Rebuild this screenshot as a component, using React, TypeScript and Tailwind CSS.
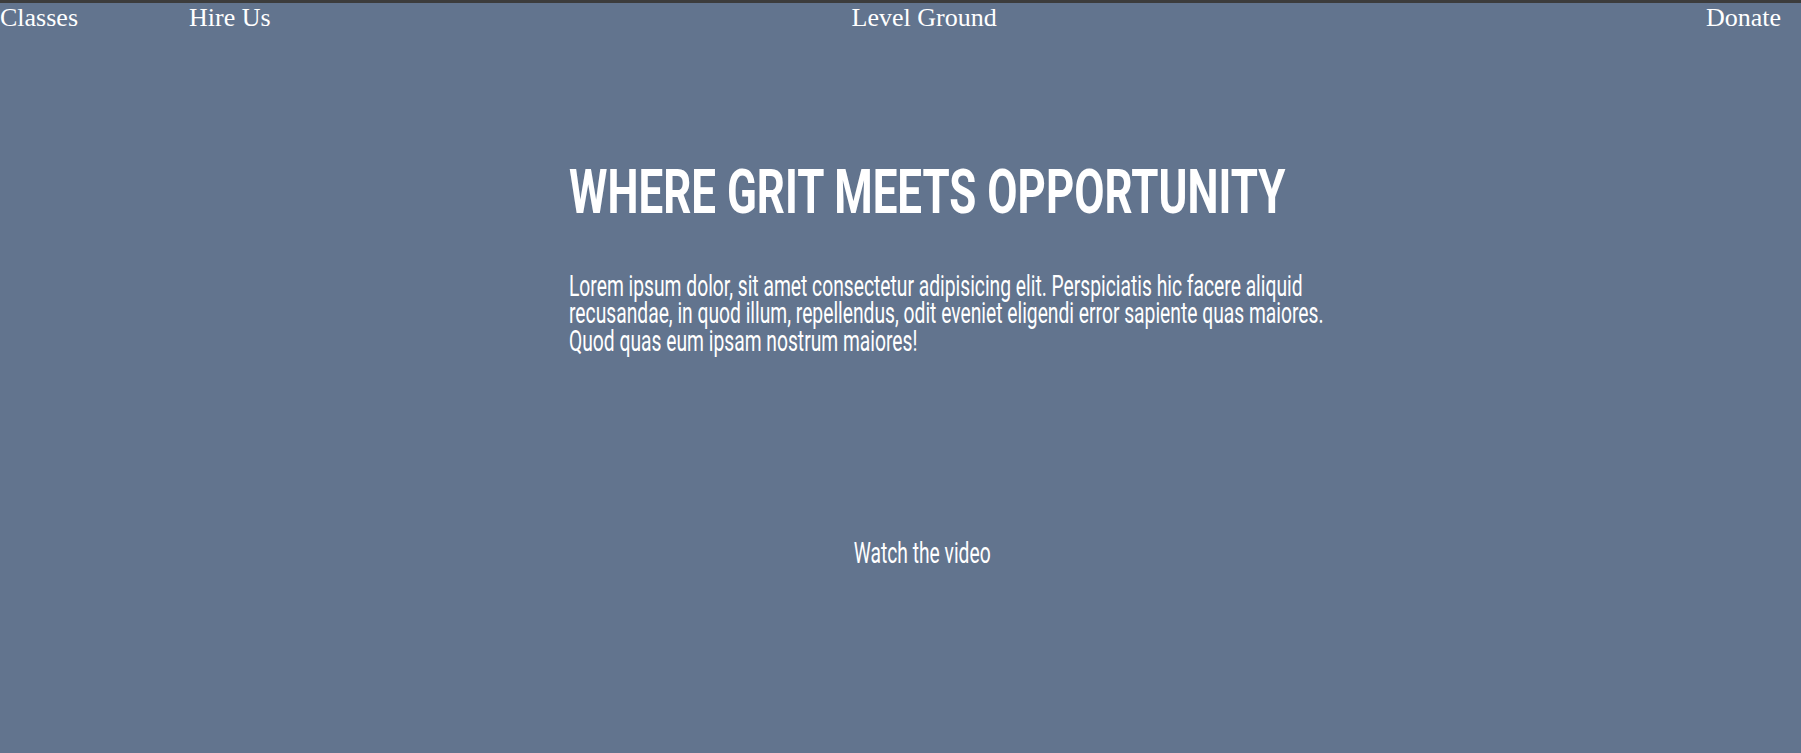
export default function App() {
  const nav = "font-['Liberation_Serif',serif] text-[26px] leading-[1.15] text-white";
  // condensed look: no narrow family is installed, so squeeze Roboto horizontally
  const cond = "font-['Roboto',sans-serif]";

  return (
    <div className="min-h-[753px] border-t-[3px] border-[#3c3c3c] bg-slate-500 text-white">
      {/* Top nav */}
      <nav className="flex items-baseline">
        <a href="#" className={nav}>Classes</a>
        <a href="#" className={`${nav} ml-[111px]`}>Hire Us</a>
        <a href="#" className={`${nav} ml-[581px]`}>Level Ground</a>
        <a href="#" className={`${nav} ml-auto mr-[20px]`}>Donate</a>
      </nav>

      {/* Hero */}
      <section className="pl-[569px] pt-[129px]">
        <h1 className={`${cond} inline-block origin-left scale-x-[0.72] whitespace-nowrap text-[61px] font-bold uppercase leading-none`}>
          Where grit meets opportunity
        </h1>
        <p className={`${cond} mt-[50px] w-[1160px] origin-left scale-x-[0.664] text-[29px] font-normal leading-[27.6px]`}>
          Lorem ipsum dolor, sit amet consectetur adipisicing elit. Perspiciatis hic facere aliquid
          recusandae, in quod illum, repellendus, odit eveniet eligendi error sapiente quas maiores.
          Quod quas eum ipsam nostrum maiores!
        </p>
      </section>

      <div className="mt-[183px] flex justify-center pl-[44px]">
        <a href="#" className={`${cond} inline-block scale-x-[0.664] text-[29px] font-normal leading-none`}>
          Watch the video
        </a>
      </div>
    </div>
  );
}
